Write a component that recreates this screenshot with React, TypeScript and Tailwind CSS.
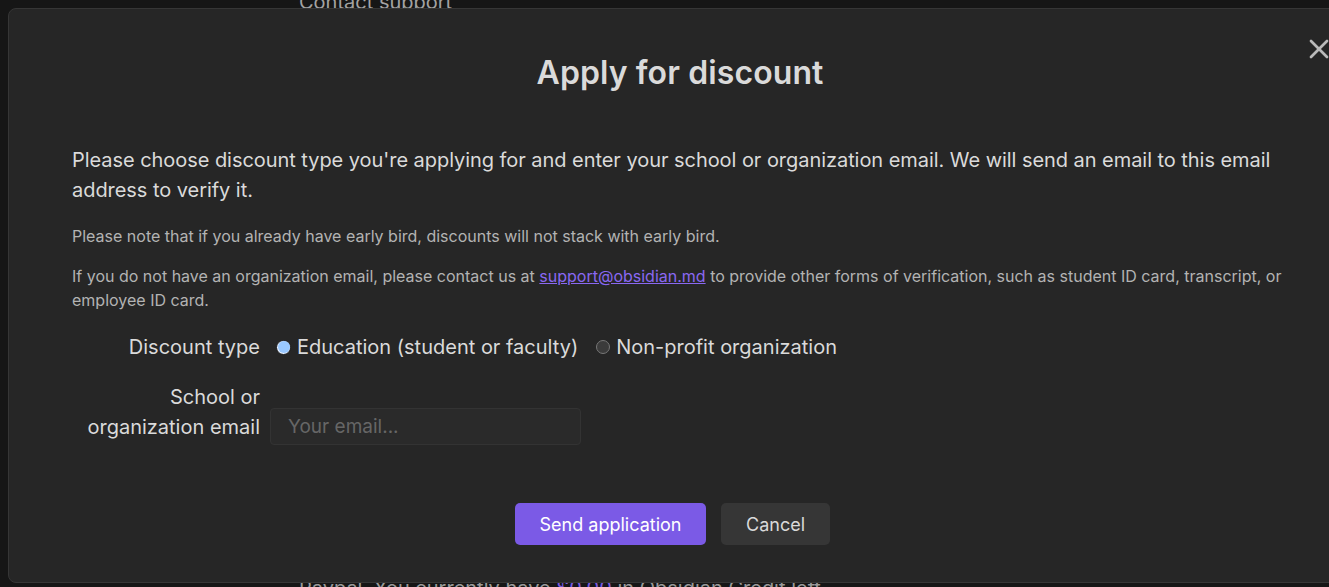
import { X } from "lucide-react";

export default function App() {
  return (
    <div className="relative h-[587px] w-full overflow-hidden bg-[#161616] font-['Inter','Noto_Sans',sans-serif] text-[#dadada]">
      {/* page behind the modal */}
      <div className="flex h-full flex-col justify-between pl-[299px] text-[20px] leading-[30px] text-[#a3a3a3]">
        <div className="-mt-[13px]">Contact support</div>
        <div className="-mb-[16px] text-[#9a9a9a]">
          Paypal. You currently have{" "}
          <span className="text-[#7a5ae0] underline">$0.00</span> in Obsidian Credit left.
        </div>
      </div>

      {/* modal */}
      <div className="absolute left-[8px] top-[8px] flex h-[575px] w-[1344px] flex-col rounded-[8px] border border-[#363636] bg-[#262626] px-[63px] pt-[45px]">
        <button className="absolute right-[16px] top-[24px] text-[#bababa]">
          <X size={32} strokeWidth={2} />
        </button>

        <h1 className="text-center text-[32px] font-semibold leading-[38px] tracking-[0.1px] text-[#dadada]">
          Apply for discount
        </h1>

        <p className="mt-[53px] text-[20px] leading-[30px] tracking-[-0.05px]">
          Please choose discount type you're applying for and enter your school or organization email. We will send an
          email to this email address to verify it.
        </p>

        <p className="mt-[19px] text-[16px] leading-[24px] text-[#b3b3b3]">
          Please note that if you already have early bird, discounts will not stack with early bird.
        </p>
        <p className="mt-[16px] text-[16px] leading-[24px] text-[#b3b3b3]">
          If you do not have an organization email, please contact us at{" "}
          <a className="text-[#8a68f2] underline">support@obsidian.md</a> to provide other forms of verification, such as
          student ID card, transcript, or employee ID card.
        </p>

        {/* discount type */}
        <div className="mt-[20px] flex items-center text-[20px] leading-[30px]">
          <div className="w-[188px] text-right">Discount type</div>
          <div className="ml-[16px] flex items-center">
            <span className="flex h-[15px] w-[15px] items-center justify-center rounded-full border border-[#1b1b1b] bg-[#e8f1ff]">
              <span className="h-[12px] w-[12px] rounded-full bg-[#99c8ff]" />
            </span>
            <span className="ml-[6px] mr-[18px]">Education (student or faculty)</span>
            <span className="h-[14px] w-[14px] rounded-full border border-[#777] bg-[#3b3b3b]" />
            <span className="ml-[6px]">Non-profit organization</span>
          </div>
        </div>

        {/* email */}
        <div className="mt-[20px] flex items-end text-[20px] leading-[30px]">
          <div className="w-[188px] text-right">
            School or
            <br />
            organization email
          </div>
          <input
            placeholder="Your email..."
            className="-mb-[3px] ml-[10px] h-[37px] w-[311px] rounded-[4px] border border-[#333] bg-[#2a2a2a] px-[17px] text-[19px] text-[#dadada] placeholder:text-[#666] focus:outline-none"
          />
        </div>

        {/* actions */}
        <div className="mt-[61px] flex justify-center gap-[15px] pr-[15px] text-[18px]">
          <button className="h-[42px] w-[191px] rounded-[5px] bg-[#7b5ae6] text-white">Send application</button>
          <button className="h-[42px] w-[109px] rounded-[5px] bg-[#363636] text-[#dadada]">Cancel</button>
        </div>
      </div>
    </div>
  );
}
